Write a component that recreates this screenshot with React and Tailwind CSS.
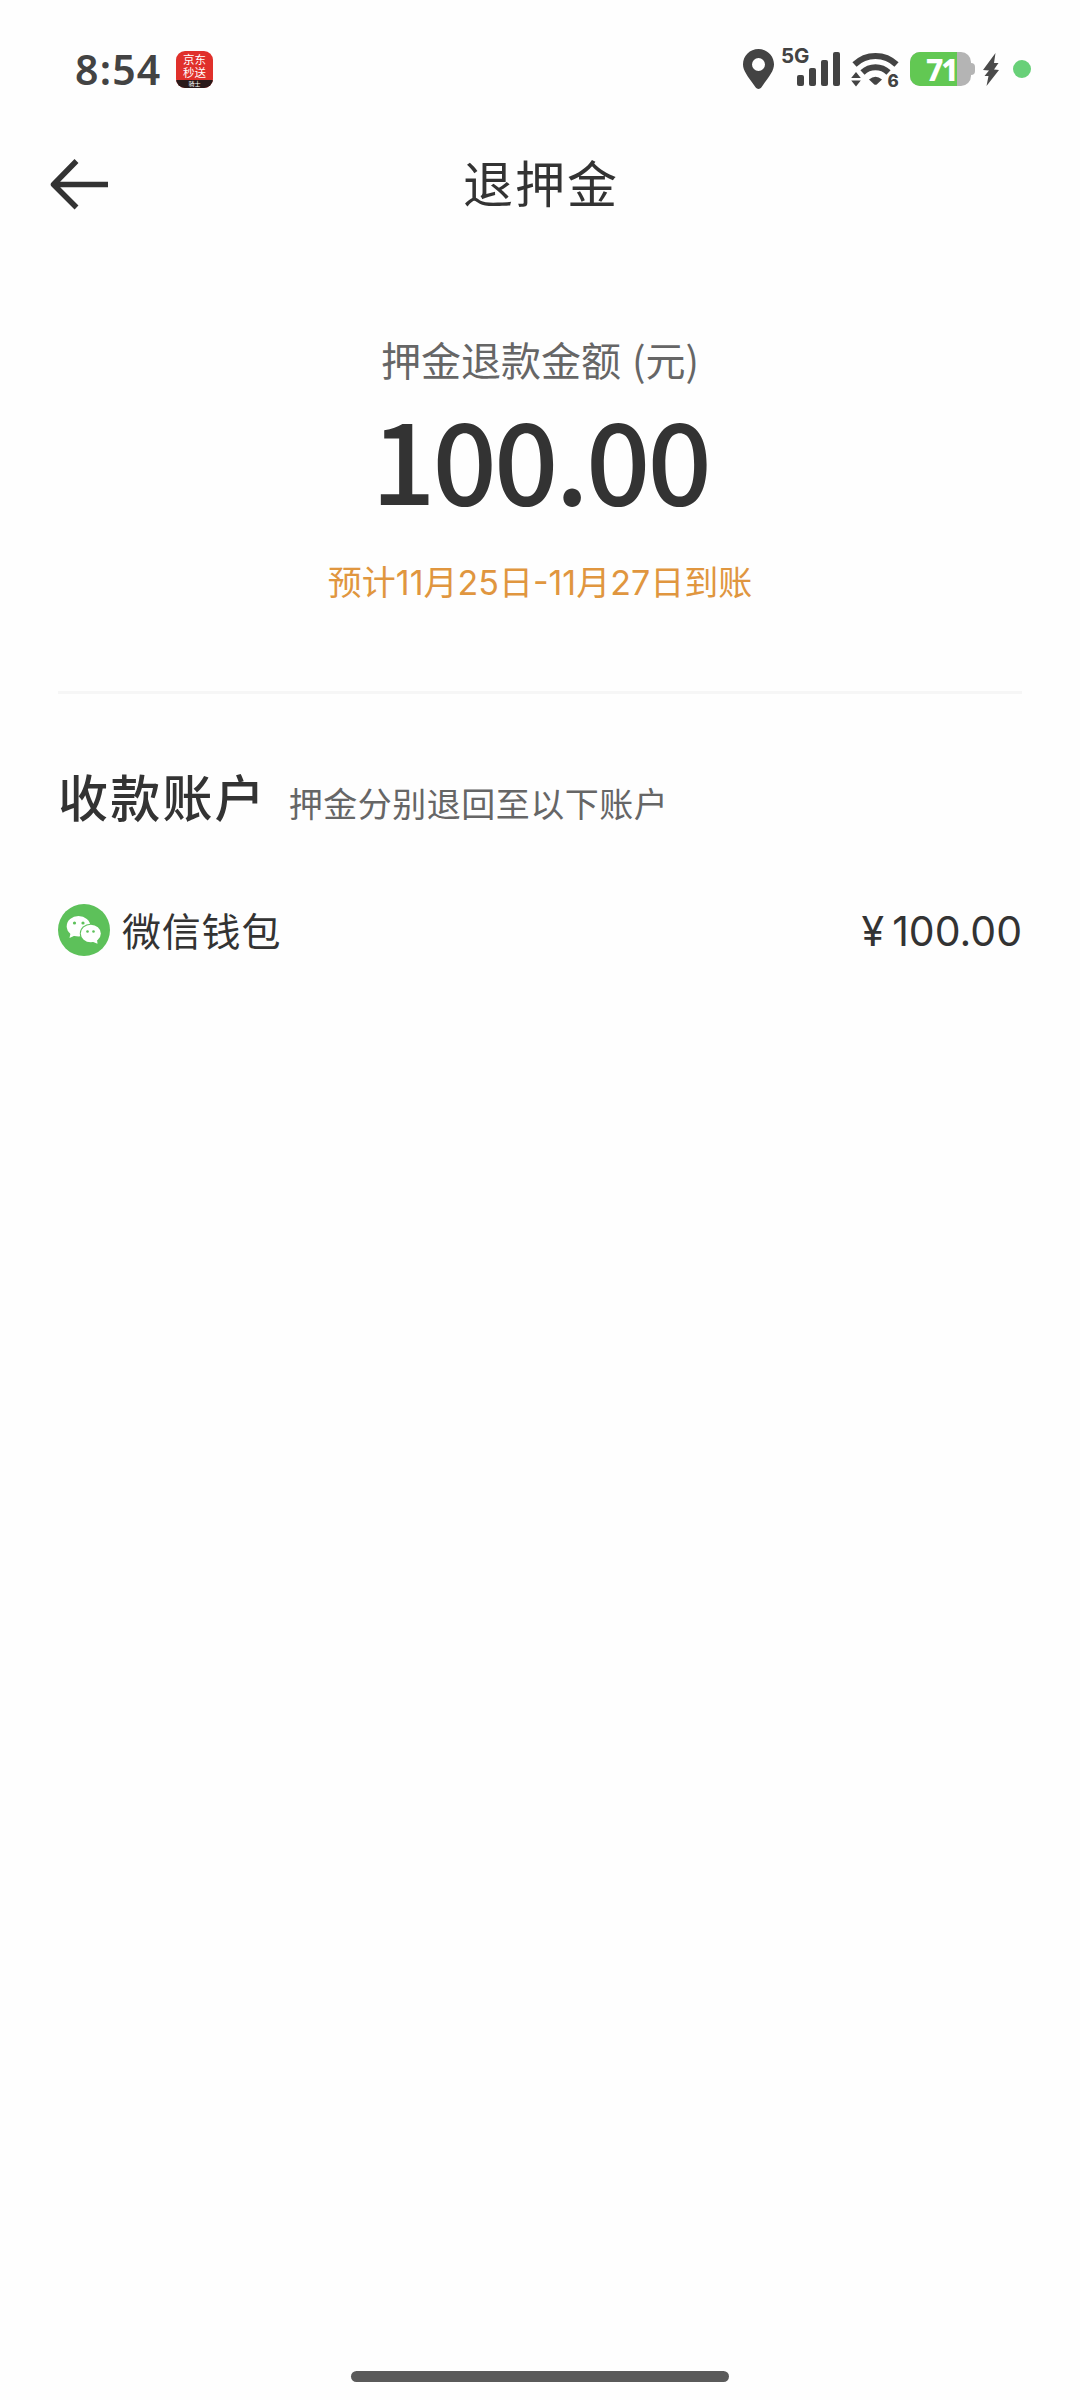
import React from "react";

const cjk = "font-['Noto_Sans_CJK_SC',sans-serif]";
const latin = "font-['Inter','Noto_Sans_CJK_SC',sans-serif]";

function AppBadge() {
  return (
    <div
      className={`${cjk} ml-4 mt-[51px] flex h-[37px] w-[37px] flex-col items-center overflow-hidden rounded-[9px] bg-[#e0302b] pt-[2px] text-[11.5px] leading-[13px] text-white`}
    >
      <span>京东</span>
      <span>秒送</span>
      <span className="mt-px h-[9px] w-full bg-[#2a1a1a] text-center text-[6px] leading-[8px]">
        骑士
      </span>
    </div>
  );
}

function LocationIcon() {
  return (
    <svg className="mt-[49px] h-[40px] w-[31px]" viewBox="0 0 31 40" fill="#434343">
      <path
        fillRule="evenodd"
        d="M15.5 0C6.9 0 0 6.8 0 15.2c0 6.600 4.300 11.300 12.700 23.300 1.400 1.900 4.200 1.900 5.600 0C26.700 26.500 31 21.800 31 15.200 31 6.800 24.100 0 15.500 0Zm0 9a6.500 6.500 0 1 1 0 13 6.500 6.500 0 0 1 0-13Z"
      />
    </svg>
  );
}

function Signal() {
  return (
    <div className="ml-[7px] mt-[46px] flex h-[40px] w-[59px]">
      <span className={`${latin} w-[16px] text-[20.5px] font-bold leading-[20px] text-[#434343]`}>
        5G
      </span>
      <div className="flex items-end gap-[5px]">
        <i className="h-[11px] w-[7px] rounded-[2px] bg-[#434343]" />
        <i className="h-[18px] w-[7px] rounded-[2px] bg-[#434343]" />
        <i className="h-[26px] w-[7px] rounded-[2px] bg-[#434343]" />
        <i className="h-[34px] w-[7px] rounded-[2px] bg-[#434343]" />
      </div>
    </div>
  );
}

function Wifi() {
  return (
    <svg className="ml-[11px] mt-[50px] h-[40px] w-[48px]" viewBox="0 0 48 40" fill="#434343">
      <path d="M3.500 14.500A30 30 0 0 1 45.500 14.500" fill="none" stroke="#434343" strokeWidth="6" />
      <path d="M11.500 22.500A18.500 18.500 0 0 1 37.500 22.500" fill="none" stroke="#434343" strokeWidth="6" />
      <path d="M18 29.500Q24.500 24 31 29.500L26 34.200Q24.500 35.500 23 34.200Z" />
      <path d="M5 22 9.800 28H.2ZM5 36.500 .2 30.500H9.800Z" />
      <text x="36.500" y="37" fontFamily="Inter" fontSize="17" fontWeight="800">6</text>
    </svg>
  );
}

function Battery() {
  return (
    <div className="ml-[11px] mt-[52px] flex h-[34px] items-center">
      <div className="flex h-[34px] w-[61px] rounded-[10px] bg-[#b4b4b4]">
        <div className="h-full w-[47px] rounded-l-[10px] bg-[#62c853] pl-[16px] font-['Noto_Sans'] text-[30px] font-extrabold leading-[35px] tracking-[-2px] text-white">
          71
        </div>
      </div>
      <i className="h-[12px] w-[4px] rounded-r-[4px] bg-[#b4b4b4]" />
    </div>
  );
}

function StatusBar() {
  return (
    <div className="flex h-[120px] items-start">
      <div className="ml-[75px] mt-[43px] w-[85px] whitespace-nowrap font-['Noto_Sans'] text-[41px] font-semibold leading-[52px] tracking-[1.2px] text-[#434343]">
        8:54
      </div>
      <AppBadge />
      <div className="ml-auto flex items-start">
        <LocationIcon />
        <Signal />
        <Wifi />
        <Battery />
        <svg className="ml-2 mt-[53px] h-[33px] w-[16px]" viewBox="0 0 16 33" fill="#4a4a4a">
          <path d="M12.500 0 0 17 6 17.500 1.500 23 5.500 23 3.500 33 16 17 11 16.500 15.500 10 11 10Z" />
        </svg>
        <i className="ml-[14px] mr-[49px] mt-[60px] h-[18px] w-[18px] rounded-full bg-[#68d078]" />
      </div>
    </div>
  );
}

function Header() {
  return (
    <div className="grid h-[128px] grid-cols-[1fr_auto_1fr] items-center">
      <svg className="ml-[50px] h-[52px] w-[60px]" viewBox="0 0 60 52" fill="none" stroke="#333" strokeWidth="5.500">
        <path d="M26.500 3 3.500 26.500 26.500 49.500M3.500 26.500H58" strokeLinejoin="round" />
      </svg>
      <h1 className="mb-[7px] pl-[2px] text-[50px] leading-[60px] tracking-[2px] text-[#333]">退押金</h1>
    </div>
  );
}

function App() {
  return (
    <div className={`${cjk} flex h-[2400px] w-[1080px] flex-col bg-[#fefefe] text-[#333]`}>
      <StatusBar />
      <Header />

      <div className="mx-[58px] flex h-[446px] flex-col items-center border-b-[3px] border-[#f6f6f6]">
        <p className="mt-[81px] whitespace-pre text-[40px] leading-[60px] [word-spacing:2px] text-[#666]">
          押金退款金额 (元)
        </p>
        <p className="mt-[-3px] text-[113px] font-medium leading-[140px] tracking-[-3px]">100.00</p>
        <p className={`${latin} mt-[32px] text-[34px] leading-[50px] text-[#e0963f]`}>
          预计11月25日-11月27日到账
        </p>
      </div>

      <div className="ml-[58px] mt-[64px] flex items-baseline">
        <h2 className="text-[50px] font-medium leading-[74px] tracking-[2.200px]">收款账户</h2>
        <span className="ml-[22px] text-[34px] leading-[50px] tracking-[0.500px] text-[#666]">
          押金分别退回至以下账户
        </span>
      </div>

      <div className="mx-[58px] mt-[70px] flex h-[56px] items-center">
        <svg className="h-[52px] w-[52px]" viewBox="0 0 52 52">
          <circle cx="26" cy="26" r="26" fill="#5dc15a" />
          <path fill="#fff" d="M13 27 11.500 34 18 31Z" />
          <ellipse cx="20.500" cy="22.300" rx="11.800" ry="10.200" fill="#fff" />
          <ellipse cx="32.800" cy="29.500" rx="11" ry="9.800" fill="#5dc15a" />
          <ellipse cx="32.800" cy="29.500" rx="10" ry="8.800" fill="#fff" />
          <path fill="#fff" d="M34 37.500 39.500 39.800 39 35Z" />
          <g fill="#5dc15a">
            <circle cx="16.500" cy="19" r="1.600" />
            <circle cx="25" cy="19" r="1.600" />
            <circle cx="29.500" cy="27.500" r="1.300" />
            <circle cx="35.500" cy="27.500" r="1.300" />
          </g>
        </svg>
        <span className="mb-[3px] ml-[12px] text-[39px] leading-[56px] tracking-[0.8px]">微信钱包</span>
        <span className={`${latin} ml-auto mt-[2px] flex items-center text-[41px] leading-[56px]`}>
          <span className="mr-2">¥</span>100.00
        </span>
      </div>

      <div className="mx-auto mb-[18px] mt-auto h-[11px] w-[378px] rounded-full bg-[#5a5a5a]" />
    </div>
  );
}

export default App;
